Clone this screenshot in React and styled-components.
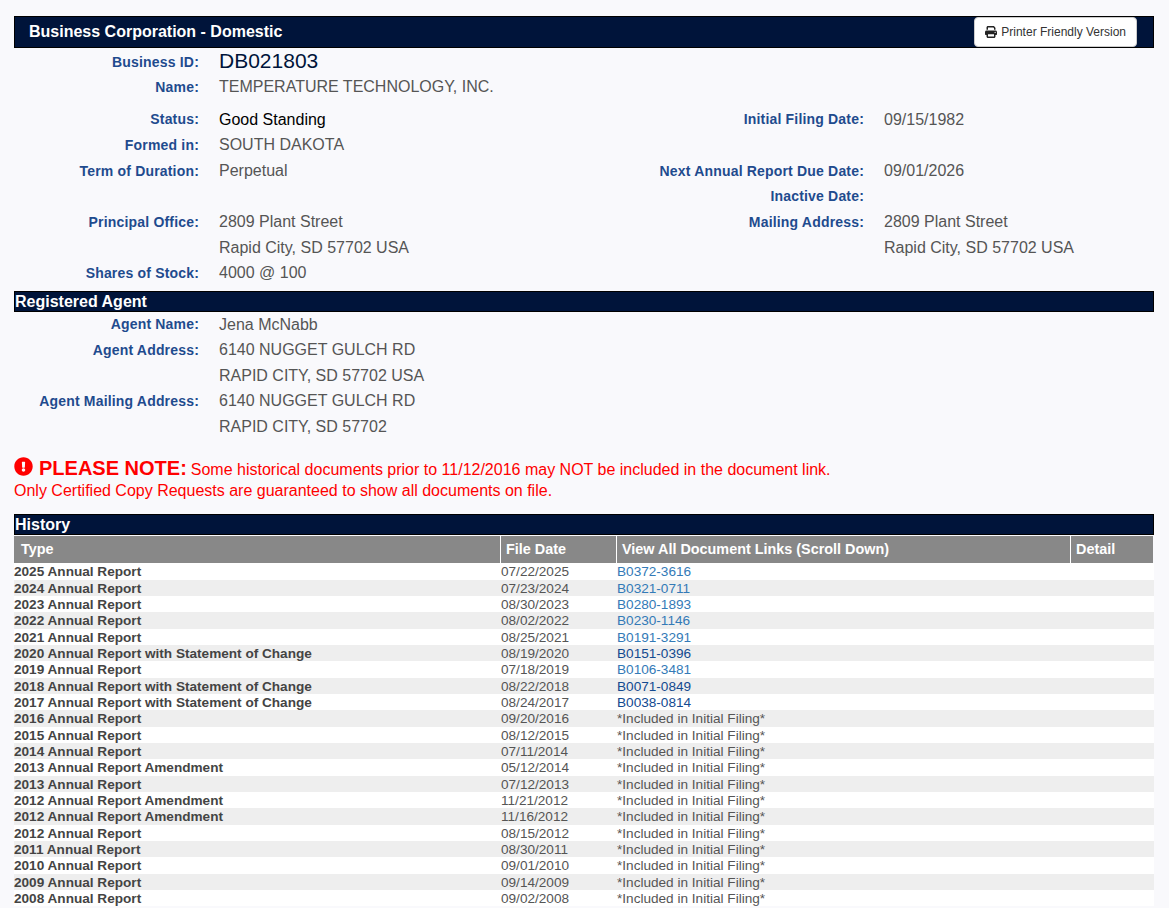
import React from 'react';
import styled, { createGlobalStyle } from 'styled-components';
import { FaExclamationCircle } from 'react-icons/fa';
import { FaPrint } from 'react-icons/fa6';

const GlobalStyle = createGlobalStyle`
  html, body {
    margin: 0;
    padding: 0;
    background: #f9f9fc;
    font-family: "Liberation Sans", Arial, sans-serif;
    overflow: hidden;
  }
`;

const Page = styled.div`
  width: 1140px;
  margin-left: 14px;
  padding-top: 16px;
`;

const TitleBar = styled.div`
  display: flex;
  align-items: center;
  justify-content: space-between;
  height: 32px;
  box-sizing: border-box;
  padding: 0 16px 0 14px;
  background: #00143a;
  border: 1px solid #000;
  color: #fff;
  font-size: 16px;
  font-weight: bold;
`;

const PrintButton = styled.button`
  display: flex;
  align-items: center;
  gap: 4px;
  height: 30px;
  padding: 0 10px;
  background: #fff;
  border: 1px solid #ccc;
  border-radius: 4px;
  color: #333;
  font-family: inherit;
  font-size: 12px;
`;

const Details = styled.div`
  padding-top: 0.5px;
`;

const AgentDetails = styled.div`
  margin-top: -0.4px;
`;

const InfoRow = styled.div`
  display: grid;
  grid-template-columns: 185px 405px 220px 1fr;
  column-gap: 20px;
  align-items: center;
  height: 25.6px;
  margin-top: ${(p) => p.$gap || 0}px;
`;

const Label = styled.div`
  text-align: right;
  color: #1f4b8e;
  font-size: 14px;
  font-weight: bold;
  letter-spacing: 0.18px;
  white-space: nowrap;
`;

const Value = styled.div`
  padding-top: 0.7px;
  color: ${(p) => p.$color || '#555'};
  font-size: 16px;
  white-space: nowrap;
`;

const BusinessId = styled.div`
  padding-bottom: 3px;
  color: #00143a;
  font-size: 21px;
  white-space: nowrap;
`;

const SectionBar = styled.div`
  box-sizing: border-box;
  height: 21px;
  margin-top: ${(p) => p.$top}px;
  background: #00143a;
  border: 1px solid #000;
  color: #fff;
  font-size: 16px;
  font-weight: bold;
  line-height: 19px;
`;

const Note = styled.div`
  margin-top: 17.9px;
  color: #f00;
  font-size: 16px;
  line-height: 21px;
`;

const NoteHead = styled.strong`
  font-size: 20px;
  margin: 0 4px 0 0;
`;

const NoteIcon = styled(FaExclamationCircle)`
  width: 19px;
  height: 19px;
  margin-right: 6px;
  vertical-align: -1px;
`;

const HistoryCols = '486px 116px 454px 1fr';

const HeadRow = styled.div`
  display: grid;
  grid-template-columns: ${HistoryCols};
  height: 27px;
  margin: 1px 1px 0 0;
`;

const HeadCell = styled.div`
  padding-left: ${(p) => (p.$first ? 6 : 5)}px;
  background: #888;
  border-left: ${(p) => (p.$first ? '1px solid #888' : '1px solid #fff')};
  color: #fff;
  font-size: 14.4px;
  font-weight: bold;
  line-height: 27px;
`;

const Row = styled.div`
  display: grid;
  grid-template-columns: ${HistoryCols};
  box-sizing: border-box;
  height: 16.33px;
  padding-top: 1px;
  background: ${(p) => (p.$alt ? '#eee' : '#fff')};
  color: #555;
  font-size: 13.6px;
  line-height: 15.33px;
  white-space: nowrap;

  &:first-of-type {
    height: 18px;
    line-height: 16.3px;
  }
`;

const TypeCell = styled.div`
  color: #444;
  font-weight: bold;
`;

const DateCell = styled.div`
  padding-left: 1px;
`;

const DocCell = styled.div`
  padding-left: 1px;
`;

const DocLink = styled.a`
  color: ${(p) => (p.$dark ? '#134a90' : '#337ab7')};
  text-decoration: none;
`;

const history = [
  ['2025 Annual Report', '07/22/2025', 'B0372-3616'],
  ['2024 Annual Report', '07/23/2024', 'B0321-0711'],
  ['2023 Annual Report', '08/30/2023', 'B0280-1893'],
  ['2022 Annual Report', '08/02/2022', 'B0230-1146'],
  ['2021 Annual Report', '08/25/2021', 'B0191-3291'],
  ['2020 Annual Report with Statement of Change', '08/19/2020', 'B0151-0396', true],
  ['2019 Annual Report', '07/18/2019', 'B0106-3481'],
  ['2018 Annual Report with Statement of Change', '08/22/2018', 'B0071-0849', true],
  ['2017 Annual Report with Statement of Change', '08/24/2017', 'B0038-0814', true],
  ['2016 Annual Report', '09/20/2016'],
  ['2015 Annual Report', '08/12/2015'],
  ['2014 Annual Report', '07/11/2014'],
  ['2013 Annual Report Amendment', '05/12/2014'],
  ['2013 Annual Report', '07/12/2013'],
  ['2012 Annual Report Amendment', '11/21/2012'],
  ['2012 Annual Report Amendment', '11/16/2012'],
  ['2012 Annual Report', '08/15/2012'],
  ['2011 Annual Report', '08/30/2011'],
  ['2010 Annual Report', '09/01/2010'],
  ['2009 Annual Report', '09/14/2009'],
  ['2008 Annual Report', '09/02/2008'],
];

const App = () => (
  <Page>
    <GlobalStyle />
    <TitleBar>
      Business Corporation - Domestic
      <PrintButton>
        <FaPrint size={12} color="#222" />
        Printer Friendly Version
      </PrintButton>
    </TitleBar>

    <Details>
      <InfoRow>
        <Label>Business ID:</Label>
        <BusinessId>DB021803</BusinessId>
      </InfoRow>
      <InfoRow>
        <Label>Name:</Label>
        <Value>TEMPERATURE TECHNOLOGY, INC.</Value>
      </InfoRow>
      <InfoRow $gap={7}>
        <Label>Status:</Label>
        <Value $color="#000">Good Standing</Value>
        <Label>Initial Filing Date:</Label>
        <Value>09/15/1982</Value>
      </InfoRow>
      <InfoRow>
        <Label>Formed in:</Label>
        <Value>SOUTH DAKOTA</Value>
      </InfoRow>
      <InfoRow>
        <Label>Term of Duration:</Label>
        <Value>Perpetual</Value>
        <Label>Next Annual Report Due Date:</Label>
        <Value>09/01/2026</Value>
      </InfoRow>
      <InfoRow>
        <span />
        <span />
        <Label>Inactive Date:</Label>
      </InfoRow>
      <InfoRow>
        <Label>Principal Office:</Label>
        <Value>2809 Plant Street</Value>
        <Label>Mailing Address:</Label>
        <Value>2809 Plant Street</Value>
      </InfoRow>
      <InfoRow>
        <span />
        <Value>Rapid City, SD 57702 USA</Value>
        <span />
        <Value>Rapid City, SD 57702 USA</Value>
      </InfoRow>
      <InfoRow>
        <Label>Shares of Stock:</Label>
        <Value>4000 @ 100</Value>
      </InfoRow>
    </Details>

    <SectionBar $top={5}>Registered Agent</SectionBar>
    <AgentDetails>
      <InfoRow>
        <Label>Agent Name:</Label>
        <Value>Jena McNabb</Value>
      </InfoRow>
      <InfoRow>
        <Label>Agent Address:</Label>
        <Value>6140 NUGGET GULCH RD</Value>
      </InfoRow>
      <InfoRow>
        <span />
        <Value>RAPID CITY, SD 57702 USA</Value>
      </InfoRow>
      <InfoRow>
        <Label>Agent Mailing Address:</Label>
        <Value>6140 NUGGET GULCH RD</Value>
      </InfoRow>
      <InfoRow>
        <span />
        <Value>RAPID CITY, SD 57702</Value>
      </InfoRow>
    </AgentDetails>

    <Note>
      <NoteIcon />
      <NoteHead>PLEASE NOTE:</NoteHead>
      Some historical documents prior to 11/12/2016 may NOT be included in the document link.
      <br />
      Only Certified Copy Requests are guaranteed to show all documents on file.
    </Note>

    <SectionBar $top={13}>History</SectionBar>
    <HeadRow>
      <HeadCell $first>Type</HeadCell>
      <HeadCell>File Date</HeadCell>
      <HeadCell>View All Document Links (Scroll Down)</HeadCell>
      <HeadCell>Detail</HeadCell>
    </HeadRow>
    {history.map(([type, date, doc, dark], i) => (
      <Row key={i} $alt={i % 2 === 1}>
        <TypeCell>{type}</TypeCell>
        <DateCell>{date}</DateCell>
        <DocCell>
          {doc ? <DocLink href="#" $dark={dark}>{doc}</DocLink> : '*Included in Initial Filing*'}
        </DocCell>
        <div />
      </Row>
    ))}
  </Page>
);

export default App;
